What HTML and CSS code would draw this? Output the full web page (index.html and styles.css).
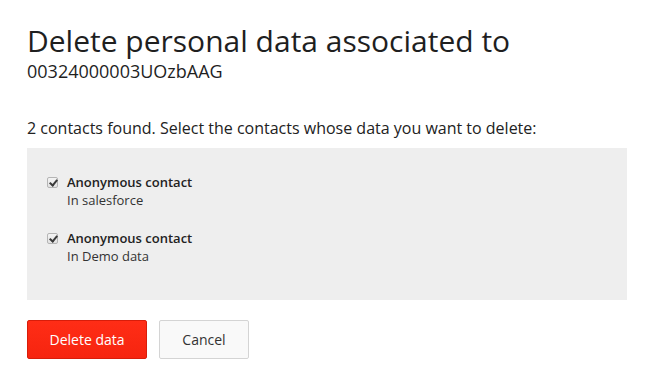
FILE: index.html
```html
<!DOCTYPE html>
<html>
<head>
<meta charset="utf-8">
<link rel="stylesheet" href="styles.css">
</head>
<body>
<div class="page">
  <h1 class="title">Delete personal data associated to</h1>
  <div class="record-id">00324000003UOzbAAG</div>
  <p class="intro">2 contacts found. Select the contacts whose data you want to delete:</p>
  <div class="panel">
    <label class="contact">
      <input class="check" type="checkbox" checked>
      <span class="contact-text">
        <span class="contact-name">Anonymous contact</span>
        <span class="contact-source">In salesforce</span>
      </span>
    </label>
    <label class="contact">
      <input class="check" type="checkbox" checked>
      <span class="contact-text">
        <span class="contact-name">Anonymous contact</span>
        <span class="contact-source">In Demo data</span>
      </span>
    </label>
  </div>
  <div class="actions">
    <button class="btn btn-danger">Delete data</button>
    <button class="btn btn-default">Cancel</button>
  </div>
</div>
</body>
</html>
```

FILE: styles.css
```css
html, body {
  margin: 0;
  padding: 0;
  background: #fff;
}
body {
  font-family: "Open Sans", "Noto Sans", sans-serif;
  color: #222;
}
.page {
  padding: 23px 33px 0 27px;
  display: flex;
  flex-direction: column;
}
.title {
  margin: 0;
  font-size: 30px;
  font-weight: 400;
  line-height: 36px;
  color: #1f1f1f;
}
.record-id {
  font-size: 18px;
  line-height: 22px;
  margin-top: 1px;
  color: #1f1f1f;
}
.intro {
  margin: 35px 0 0 0;
  font-size: 16px;
  line-height: 22px;
  color: #222;
}
.panel {
  margin-top: 9px;
  background: #eeeeee;
  height: 152px;
  box-sizing: border-box;
  padding: 25px 20px 0 20px;
  display: flex;
  flex-direction: column;
  gap: 20px;
}
.contact {
  display: flex;
  align-items: flex-start;
  gap: 9px;
  font-size: 13px;
}
.check {
  appearance: none;
  -webkit-appearance: none;
  position: relative;
  margin: 4px 0 0 0;
  width: 11px;
  height: 11px;
  box-sizing: border-box;
  border: 1px solid #b5b5b5;
  border-radius: 2px;
  background: linear-gradient(#f4f4f4, #e2e2e2);
  flex: none;
}
.check:checked::after {
  content: "";
  position: absolute;
  left: 3px;
  top: 0px;
  width: 3px;
  height: 6px;
  border-right: 2px solid #3a3a3a;
  border-bottom: 2px solid #3a3a3a;
  transform: rotate(40deg);
}
.contact-text {
  display: flex;
  flex-direction: column;
  line-height: 18px;
}
.contact-name {
  font-weight: 600;
  color: #222;
}
.contact-source {
  color: #333;
}
.actions {
  margin-top: 20px;
  display: flex;
  gap: 12px;
}
.btn {
  font-family: "Open Sans", "Noto Sans", sans-serif;
  font-size: 14px;
  height: 39px;
  border-radius: 2px;
  cursor: pointer;
}
.btn-danger {
  width: 120px;
  background: linear-gradient(#ff2d16, #f6240f);
  border: 1px solid #d81d0a;
  color: #fff;
}
.btn-default {
  width: 90px;
  background: #f9f9f9;
  border: 1px solid #d4d4d4;
  color: #333;
}
```
